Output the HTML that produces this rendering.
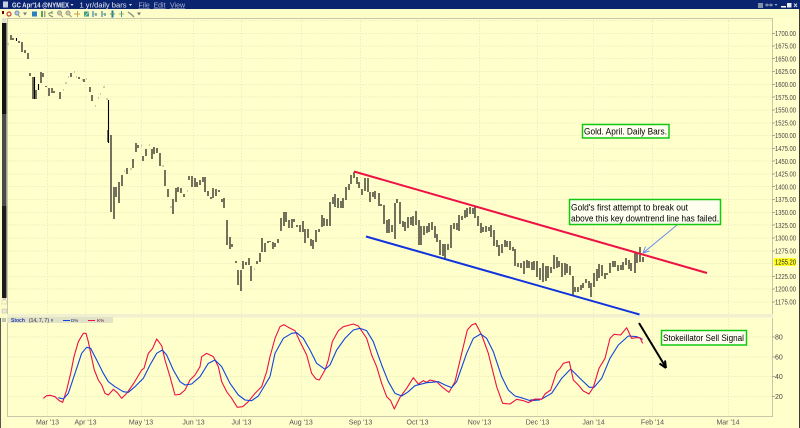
<!DOCTYPE html>
<html><head><meta charset="utf-8"><style>
html,body{margin:0;padding:0;background:#ffc}
svg{display:block}
text{font-family:"Liberation Sans",sans-serif}
</style></head><body>
<svg width="800" height="428" viewBox="0 0 800 428" xmlns="http://www.w3.org/2000/svg">
<rect width="800" height="428" fill="#ffffcc"/>
<!-- title bar -->
<rect width="800" height="9" fill="#0a2470"/>
<rect x="3" y="1.500" width="5" height="6" fill="#c8d0e0"/>
<g fill="#e4e8f4" font-size="7" font-weight="bold">
<text x="12" y="7.500" textLength="57" lengthAdjust="spacingAndGlyphs">GC Apr'14 @NYMEX</text>
<text x="79.500" y="7.500" textLength="47" lengthAdjust="spacingAndGlyphs" font-weight="normal" font-size="7.500">1 yr/daily bars</text>
</g>
<path d="M70.500 4h3l-1.500 2zM129 4h3l-1.500 2z" fill="#e4e8f4"/>
<g fill="#a8b4d4" font-size="7">
<text x="138.500" y="7.500" text-decoration="underline">File</text>
<text x="153.500" y="7.500" text-decoration="underline">Edit</text>
<text x="170" y="7.500" text-decoration="underline">View</text>
</g>
<g>
<rect x="758" y="3" width="5" height="5" fill="#8090a8"/>
<path d="M765 5h8M767 3.500v3M771 3.500v3" stroke="#9aa6c0" fill="none"/>
<path d="M774.500 4h3l-1.500 2z" fill="#9aa6c0"/>
<rect x="781" y="6" width="5" height="1.500" fill="#fff"/>
<rect x="787" y="3" width="4.500" height="4.500" fill="#e8ecf4"/>
<path d="M794 3.500l3 3.500M797 3.500l-3 3.500" stroke="#c8d0e0" fill="none"/>
</g>
<rect y="9" width="800" height="9" fill="#fdfdc8"/>
<!-- toolbar icons -->
<g>
<rect x="2" y="11" width="2" height="3" fill="#600"/>
<circle cx="9" cy="14" r="2" fill="none" stroke="#d04040" stroke-width="1.200"/>
<circle cx="17" cy="13" r="2" fill="#b8c8e0" stroke="#7090b8"/><path d="M18 15l2 2" stroke="#a09070"/>
<path d="M23 12.500h4l-2 3z" fill="#777"/>
<rect x="32" y="11.500" width="5" height="5" fill="#3080c0"/>
<rect x="41" y="11" width="2" height="6" fill="#60a060"/><rect x="44" y="11" width="1.500" height="6" fill="#a0a880"/>
<path d="M48 14l4-2M49 15l4 2M52 11v3" stroke="#7a8a70" fill="none"/>
<circle cx="59.500" cy="13" r="2" fill="#c8c8b0" stroke="#a0a090"/><path d="M61 15l2 2" stroke="#a09070"/>
<circle cx="68" cy="13" r="2" fill="#c8c8b0" stroke="#a0a090"/><path d="M69.500 15l2 2" stroke="#a09070"/>
<path d="M74 14h6M77.500 11v6" stroke="#c8a050" fill="none"/>
<rect x="84" y="11.500" width="5" height="5" fill="#40a070"/><path d="M85 16l4-4" stroke="#a0d0e0" fill="none"/>
<path d="M93 11v6M96 13v3" stroke="#4080b0" fill="none" stroke-width="1.200"/><path d="M94 14h3" stroke="#80b060"/>
<path d="M102 11v6M105 13v3" stroke="#4080b0" fill="none" stroke-width="1.200"/><path d="M103 14h3" stroke="#80b060"/>
<path d="M112.500 10.500v7" stroke="#2080b0" stroke-width="2"/><path d="M110 14h5" stroke="#70a050"/>
<path d="M121.500 11v6" stroke="#4090a0"/><path d="M119 14h5" stroke="#90b060"/>
<path d="M128 12l4 3M131 14l3 3" stroke="#8a9090" stroke-width="1.400" fill="none"/>
<path d="M137 12.500h4l-2 3z" fill="#777"/>
</g>
<!-- left strip -->
<rect x="0" y="18" width="7" height="410" fill="#fdfdc8"/>
<rect x="2" y="18" width="4.500" height="5" fill="#e0e0d0"/>
<rect x="2" y="23" width="4.500" height="91" fill="#141414"/>
<rect x="2" y="114" width="4.500" height="92" fill="#4a4a4a"/>
<rect x="2" y="206" width="4.500" height="92" fill="#1c1c1c"/>
<rect x="3" y="298" width="3" height="2" fill="#d0d0d0"/>
<rect x="2" y="300" width="4.500" height="4" fill="#fdfdc8" stroke="#c8c8b8" stroke-width=".5"/>
<rect x="2" y="309" width="4.500" height="4" fill="#e8e8d8" stroke="#b8b8b0" stroke-width=".5"/>
<rect x="2" y="318" width="4" height="4" fill="#c0c0b0"/>
<rect x="0" y="318" width="1" height="110" fill="#555"/>
<!-- grid -->
<path d="M8 20.500H772M8 33.500H772M8 46H772M8 58.500H772M8 71.500H772M8 84.500H772M8 97H772M8 110H772M8 123H772M8 135.500H772M8 148.500H772M8 161H772M8 174H772M8 186.500H772M8 199.500H772M8 212.500H772M8 225H772M8 238H772M8 251H772M8 263.500H772M8 276.500H772M8 289H772M8 302H772" stroke="#ececbc" stroke-width="1" stroke-dasharray="1.500 1.500" fill="none"/>
<path d="M8 337H772M8 357H772M8 376.500H772M8 396.500H772" stroke="#ececbc" stroke-width="1" stroke-dasharray="1.500 1.500" fill="none"/>
<path d="M47.500 18V314M85.500 18V314M141.500 18V314M193.500 18V314M241.500 18V314M301.500 18V314M360.500 18V314M417.500 18V314M479.500 18V314M537.500 18V314M593.500 18V314M652.500 18V314M728.500 18V314M47.500 318V416M85.500 318V416M141.500 318V416M193.500 318V416M241.500 318V416M301.500 318V416M360.500 318V416M417.500 318V416M479.500 318V416M537.500 318V416M593.500 318V416M652.500 318V416M728.500 318V416" stroke="#ececc0" stroke-width="1" stroke-dasharray="1.500 1.500" fill="none"/>
<!-- frames -->
<path d="M7 18.500H772.500V314M7 416.500H772.500V318M7.500 18V416" stroke="#c8c8a8" fill="none"/>
<rect x="7" y="314" width="766" height="3.500" fill="#f0f0d0"/>
<!-- price bars -->
<path stroke="#000" stroke-width="1.100" fill="none" d="M11 35V40M13 38V40M16.500 38V41M19 41V43M22 42V52M25 50V53M28 53V59M30 73V76M33 77V99M34.500 77V99M36 90V99M38.500 84V90M41 72V83M43 73V77M46 86V87M49 88V96M52 88V93M54 91V93M60 92V99M71 73V77M79 77V79M84 79V82M90 87V92M92 95V101M108.500 100V143M108 130V142M111 135V212M114 187V219M116 187V197M119 182V203M122 175V186M127 168V174M133 159V168M136 143V152M138 145V148M143 156V161M146 149V156M152 149V159M154 147V154M157 148V153M160 153V166M165 170V186M168 189V197M173 199V214M176 188V202M178 187V192M181 188V193M184 194V197M189 176V180M192 176V187M195 178V187M197 182V187M200 180V185M203 177V182M205 177V192M208 191V196M211 197V199M213 188V198M216 189V196M219 190V192M222 199V202M224 198V208M227 220V245M230 237V249M232 244V247M236 261V263M238 270V285M241 270V291M243 261V269M246 262V265M249 258V265M251 266V281M257 261V264M260 253V262M262 238V252M265 243V252M268 241V243M270 241V242M273 242V249M275 243V247M278 239V243M281 218V231M284 212V226M286 212V222M289 220V228M292 219V228M294 219V222M297 225V227M300 225V232M303 221V232M305 229V243M308 229V238M311 239V246M313 240V249M316 230V242M319 229V232M322 215V227M324 218V226M327 219V226M330 202V226M333 197V204M335 194V207M338 198V208M341 201V208M343 198V208M346 187V200M349 184V190M351 175V184M354 172V178M357 177V184M359 182V188M362 189V195M365 178V191M368 178V192M370 192V202M373 192V197M375 191V199M379 193V206M381 204V206M384 205V224M387 220V233M389 219V233M392 225V232M395 203V239M397 199V203M400 202V224M403 221V227M405 222V231M408 217V228M411 217V225M413 216V226M416 211V225M419 220V245M421 226V245M424 226V235M427 226V233M429 223V232M432 222V230M435 226V238M437 234V242M440 240V255M443 244V256M445 244V259M448 244V250M451 225V248M454 223V229M457 223V230M459 215V231M462 216V220M465 210V218M467 208V217M470 207V214M473 208V214M475 207V218M478 216V226M481 223V233M483 227V232M486 226V232M489 227V231M491 225V237M494 230V246M497 240V247M499 245V256M502 244V253M505 240V247M507 241V247M510 241V250M513 247V251M515 249V266M518 263V267M521 263V268M524 261V274M527 260V268M529 261V268M532 262V270M534 261V270M537 261V277M540 268V280M543 263V282M546 266V281M548 266V278M551 267V273M554 255V269M557 257V268M559 261V267M562 263V277M565 263V275M567 264V273M570 266V275M573 276V295M575 287V292M578 287V292M581 285V290M583 283V288M586 279V283M589 281V288M591 283V297M594 273V287M597 269V281M599 264V278M602 265V276M605 273V279M607 273V275M610 263V273M613 261V267M615 261V267M618 265V271M621 265V270M623 262V270M626 258V265M629 260V269M631 263V271M635 253V273M637 252V263M640 247V262M643 257V262"/>
<path stroke="#999980" stroke-width="1" fill="none" d="M8 43V45M63 90H64M65 83H67M68 77H69M74 72H75M76 77H77M82 80H83M86 79H87M95 106H96M98 98H99M100 94H101M103 87H105M106 99H108M124 171H125M130 169H132M141 146H142M149 145H150M162 166H164M170 207H172M187 191H188M254 269H255"/>
<!-- trend lines -->
<path d="M354 171.500L707 273" stroke="#ee1144" stroke-width="2" fill="none"/>
<path d="M366 236.500L639.500 314.500" stroke="#1133dd" stroke-width="2" fill="none"/>
<!-- blue arrow -->
<path d="M677 225L643 253M643 253l2.500-6.500M643 253l6.500-2" stroke="#6a8cf0" stroke-width="1" fill="none"/>
<!-- black arrow -->
<path d="M639 323L665 366M666 368l-1-7.500M666 368l-6.500-4.500" stroke="#000" stroke-width="2" fill="none"/>
<!-- stoch -->
<rect x="7" y="317" width="106" height="6" fill="#e2e2c6"/>
<g font-size="5" font-weight="bold">
<text x="11" y="322" fill="#2040b0">Stoch</text>
<text x="29" y="322" fill="#606070" textLength="20">(14, 7, 7)</text>
</g>
<rect x="51" y="319" width="2" height="2.500" fill="#8090a0"/>
<path d="M63 320.500h7" stroke="#1144dd"/><path d="M88 320.500h7" stroke="#ee1144"/>
<g font-size="4.500" font-weight="bold"><text x="71" y="322" fill="#506090">D%</text><text x="97" y="322" fill="#805060">K%</text></g>
<g transform="translate(0,310) scale(.33333)" fill="none" stroke-width="3.300" stroke-linejoin="round">
<path stroke="#ee1144" d="M130 265L140 257 150 256 165 260 178 272 188 277 200 240 212 190 222 140 235 95 250 70 258 70 265 95 272 130 283 180 295 210 305 225 315 250 325 255 340 238 352 248 365 265 380 250 400 222 425 180 432 175 445 130 458 115 470 87 485 107 495 150 510 200 525 255 540 253 555 240 570 210 585 195 600 170 605 140 620 130 640 140 655 170 665 215 680 245 695 265 712 292 728 290 745 275 765 250 785 230 800 185 810 140"/>
<path stroke="#1144dd" d="M175 263L190 267 205 250 225 190 245 130 260 112 272 115 290 150 310 190 325 215 345 230 370 245 385 247 405 230 430 205 450 165 470 130 487 120 500 135 520 180 540 215 555 225 575 222 600 200 625 160 645 150 665 170 690 220 715 255 735 270 755 272 775 258 795 225 810 200"/>
<g transform="translate(810,0)">
<path stroke="#ee1144" d="M0 140L15 85 30 50 42 44 55 52 75 62 90 95 110 135 125 190 138 207 148 210 165 180 175 150 187 95 205 62 220 50 250 42 265 48 290 85 305 135 320 170 335 220 350 260 362 272 373 297 390 262 410 235 430 203 445 222 460 212 470 217 480 210 500 215 515 230 537 247 555 215 575 130 592 60 605 45 617 40 635 75 655 130 680 230 698 280 720 282 740 268 760 272 775 278 795 268 810 268"/>
<path stroke="#1144dd" d="M0 200L15 130 40 85 65 70 80 68 100 85 120 120 140 160 165 178 180 165 200 120 225 85 250 60 270 55 290 62 310 95 335 165 355 215 375 250 395 258 415 245 435 227 470 218 505 215 525 225 545 233 560 215 590 130 610 85 632 72 650 85 670 125 695 200 715 240 735 258 760 265 780 272 810 270"/>
</g>
<g transform="translate(1590,0)">
<path stroke="#1144dd" d="M0 270L35 267 65 250 95 205 122 177 150 205 178 232 192 232 215 205 240 145 265 105 295 78 320 80 338 88"/>
<path stroke="#ee1144" d="M0 275L15 267 35 268 45 252 62 240 80 185 90 175 100 160 118 155 130 210 145 225 160 243 177 252 190 232 207 175 225 145 240 85 252 73 272 75 290 53 305 85 320 83 330 83 338 100"/>
</g>
</g>
<!-- annotation boxes -->
<g fill="#fffff0" stroke="#10c810" stroke-width="1.500">
<rect x="582.500" y="124.500" width="86.500" height="13.500"/>
<rect x="569.500" y="199.500" width="151" height="25"/>
<rect x="661.500" y="330.500" width="85" height="14.500"/>
</g>
<g fill="#000" font-size="9">
<text x="584" y="134.500" textLength="83" lengthAdjust="spacingAndGlyphs">Gold. April. Daily Bars.</text>
<text x="571" y="210.500" textLength="117" lengthAdjust="spacingAndGlyphs">Gold's first attempt to break out</text>
<text x="571" y="221.500" textLength="148" lengthAdjust="spacingAndGlyphs">above this key downtrend line has failed.</text>
<text x="663" y="341" textLength="81" lengthAdjust="spacingAndGlyphs">Stokeillator Sell Signal</text>
</g>
<!-- price scale -->
<rect x="773.500" y="258" width="22.500" height="8" fill="#ffff20"/>
<path d="M772 33.500h3M772 46h3M772 58.500h3M772 71.500h3M772 84.500h3M772 97h3M772 110h3M772 123h3M772 135.500h3M772 148.500h3M772 161h3M772 174h3M772 186.500h3M772 199.500h3M772 212.500h3M772 225h3M772 238h3M772 251h3M772 276.500h3M772 289h3M772 302h3M772 337h3M772 357h3M772 376.500h3M772 396.500h3" stroke="#a8a890" fill="none"/>
<g fill="#444" font-size="7">
<text x="775" y="36" textLength="21" lengthAdjust="spacingAndGlyphs">1700.00</text>
<text x="775" y="48.500" textLength="21" lengthAdjust="spacingAndGlyphs">1675.00</text>
<text x="775" y="61.500" textLength="21" lengthAdjust="spacingAndGlyphs">1650.00</text>
<text x="775" y="74" textLength="21" lengthAdjust="spacingAndGlyphs">1625.00</text>
<text x="775" y="87" textLength="21" lengthAdjust="spacingAndGlyphs">1600.00</text>
<text x="775" y="100" textLength="21" lengthAdjust="spacingAndGlyphs">1575.00</text>
<text x="775" y="112.500" textLength="21" lengthAdjust="spacingAndGlyphs">1550.00</text>
<text x="775" y="125.500" textLength="21" lengthAdjust="spacingAndGlyphs">1525.00</text>
<text x="775" y="138" textLength="21" lengthAdjust="spacingAndGlyphs">1500.00</text>
<text x="775" y="151" textLength="21" lengthAdjust="spacingAndGlyphs">1475.00</text>
<text x="775" y="164" textLength="21" lengthAdjust="spacingAndGlyphs">1450.00</text>
<text x="775" y="176.500" textLength="21" lengthAdjust="spacingAndGlyphs">1425.00</text>
<text x="775" y="189.500" textLength="21" lengthAdjust="spacingAndGlyphs">1400.00</text>
<text x="775" y="202" textLength="21" lengthAdjust="spacingAndGlyphs">1375.00</text>
<text x="775" y="215" textLength="21" lengthAdjust="spacingAndGlyphs">1350.00</text>
<text x="775" y="228" textLength="21" lengthAdjust="spacingAndGlyphs">1325.00</text>
<text x="775" y="240.500" textLength="21" lengthAdjust="spacingAndGlyphs">1300.00</text>
<text x="775" y="253.500" textLength="21" lengthAdjust="spacingAndGlyphs">1275.00</text>
<text x="775" y="279" textLength="21" lengthAdjust="spacingAndGlyphs">1225.00</text>
<text x="775" y="291.500" textLength="21" lengthAdjust="spacingAndGlyphs">1200.00</text>
<text x="775" y="304.500" textLength="21" lengthAdjust="spacingAndGlyphs">1175.00</text>
<text x="775" y="339.500">80</text>
<text x="775" y="359.500">60</text>
<text x="775" y="379">40</text>
<text x="775" y="399">20</text>
</g>
<text x="775" y="264.500" fill="#222" font-size="7" textLength="21" lengthAdjust="spacingAndGlyphs">1255.20</text>
<!-- date labels -->
<g fill="#555" font-size="7" text-anchor="middle">
<text x="47.500" y="424.500">Mar '13</text>
<text x="85.500" y="424.500">Apr '13</text>
<text x="141" y="424.500">May '13</text>
<text x="193.500" y="424.500">Jun '13</text>
<text x="241.500" y="424.500">Jul '13</text>
<text x="301" y="424.500">Aug '13</text>
<text x="360.500" y="424.500">Sep '13</text>
<text x="417.500" y="424.500">Oct '13</text>
<text x="479.500" y="424.500">Nov '13</text>
<text x="537.500" y="424.500">Dec '13</text>
<text x="593.500" y="424.500">Jan '14</text>
<text x="652.500" y="424.500">Feb '14</text>
<text x="728" y="424.500">Mar '14</text>
</g>
<rect x="799" y="9" width="1" height="419" fill="#3a3a3a"/>
</svg>
</body></html>
